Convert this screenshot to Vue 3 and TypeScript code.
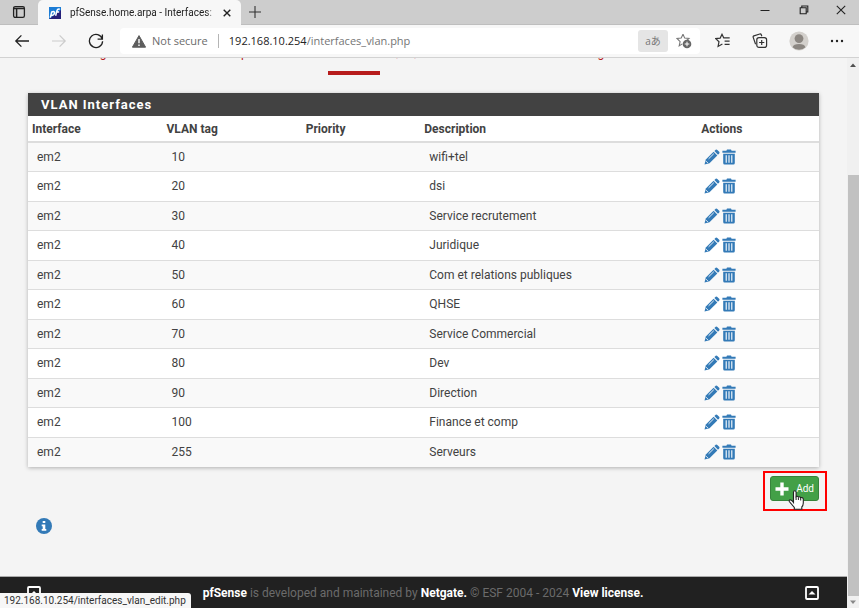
<script setup lang="ts">
interface Vlan {
  parent: string
  tag: number
  priority: string
  description: string
}

const tabs: string[] = [
  'Interface Assignments', 'Interface Groups', 'Wireless', 'VLANs', 'QinQs',
  'PPPs', 'GREs', 'GIFs', 'Bridges', 'LAGGs',
]

const entries: [number, string][] = [
  [10, 'wifi+tel'],
  [20, 'dsi'],
  [30, 'Service recrutement'],
  [40, 'Juridique'],
  [50, 'Com et relations publiques'],
  [60, 'QHSE'],
  [70, 'Service Commercial'],
  [80, 'Dev'],
  [90, 'Direction'],
  [100, 'Finance et comp'],
  [255, 'Serveurs'],
]

const vlans: Vlan[] = entries.map(([tag, description]) => ({
  parent: 'em2', tag, priority: '', description,
}))
</script>

<template>
  <div class="window">
    <header class="strip">
      <button class="workspace" aria-label="Tab actions">
        <svg width="14" height="14" viewBox="0 0 14 14"><rect x="1.6" y="1.6" width="10.8" height="10.8" rx="1.6" fill="none" stroke="#222" stroke-width="1.3" /><path d="M1.5 3.6h11M4.6 4v8.4" stroke="#222" stroke-width="1.5" fill="none" /></svg>
      </button>
      <div class="browser-tab">
        <svg class="favicon" width="12" height="12" viewBox="0 0 12 12"><rect width="12" height="12" fill="#1c7cd5" /><path d="M12 3v9H0z" fill="#252079" /><path d="M1.3 10.6L2.8 4.6M2.5 5.3C4.6 3.8 6 4.8 5.3 6.6 4.8 8.3 3.2 8.6 2 7.9M6.6 8.8L8 3.6Q8.6 1.7 10.8 2.2M7 4.9h3.2" fill="none" stroke="#fff" stroke-width="1.5" /></svg>
        <span class="tab-title">pfSense.home.arpa - Interfaces: VLANs</span>
        <button class="close-tab" aria-label="Close tab">
          <svg width="8" height="8" viewBox="0 0 8 8"><path d="M.7.7l6.6 6.6M7.3.7L.7 7.3" stroke="#222" stroke-width="1.4" /></svg>
        </button>
      </div>
      <button class="new-tab" aria-label="New tab">
        <svg width="12" height="12" viewBox="0 0 12 12"><path d="M6 0v12M0 6h12" stroke="#333" stroke-width="1.1" /></svg>
      </button>
      <div class="window-controls">
        <button aria-label="Minimize"><svg width="10" height="10" viewBox="0 0 10 10"><path d="M.5 5.5h9" stroke="#222" /></svg></button>
        <button aria-label="Restore"><svg width="10" height="10" viewBox="0 0 10 10" fill="none" stroke="#222" stroke-width="1.1"><path d="M1.2 2.7h6v6h-6zM2.8 2.7V1h6v6H7.2" /></svg></button>
        <button aria-label="Close"><svg width="10" height="10" viewBox="0 0 10 10"><path d="M.8.8l8.4 8.4M9.2.8L.8 9.2" stroke="#222" stroke-width="1.1" /></svg></button>
      </div>
    </header>

    <div class="toolbar">
      <div class="nav-buttons">
        <button aria-label="Back"><svg width="16" height="16" viewBox="0 0 16 16" fill="none" stroke="#222" stroke-width="1.3"><path d="M15 8H1.8M7.4 2.4L1.8 8l5.6 5.6" /></svg></button>
        <button aria-label="Forward" disabled><svg width="16" height="16" viewBox="0 0 16 16" fill="none" stroke="#ccc" stroke-width="1.2"><path d="M1 8h13.2M8.6 2.4L14.2 8l-5.6 5.6" /></svg></button>
        <button aria-label="Refresh"><svg width="16" height="16" viewBox="0 0 16 16" fill="none" stroke="#222" stroke-width="1.3"><path d="M14.3 6A6.6 6.6 0 1 0 14.6 8.2M14.4 1.4v4.8H9.6" /></svg></button>
      </div>
      <div class="address">
        <svg width="14" height="13" viewBox="0 0 14 13"><path d="M7 .6L13.6 12.2H.4z" fill="#5d5d5d" stroke="#5d5d5d" stroke-linejoin="round" /><path d="M7 4v4.3M7 9.5V11" stroke="#fff" stroke-width="1.4" /></svg>
        <span class="insecure">Not secure</span>
        <span class="divider"></span>
        <span class="url">192.168.10.254<span class="path">/interfaces_vlan.php</span></span>
        <button class="translate" aria-label="Translate">aあ</button>
        <button class="favorite" aria-label="Add to favorites">
          <svg width="16" height="16" viewBox="0 0 16 16"><path d="M7 1.2l1.7 3.9 4.3.4-3.2 2.9M6.3 10.9L3.2 12.9l.9-4.3L1 5.5l4.2-.4L7 1.2" fill="none" stroke="#777" stroke-width="1.1" /><circle cx="11" cy="11" r="4.3" fill="#666" /><path d="M11 8.7v4.6M8.7 11h4.6" stroke="#fff" /></svg>
        </button>
      </div>
      <div class="tools">
        <button aria-label="Favorites"><svg width="16" height="16" viewBox="0 0 16 16" fill="none" stroke="#333" stroke-width="1.2"><path d="M7.4 10.9L3.1 13.4 4 8.7.8 5.6l4.4-.5L7 1.3l1.7 3.5h6M9.6 8.1h5M9.6 11.3h5" /></svg></button>
        <button aria-label="Collections"><svg width="16" height="16" viewBox="0 0 16 16" fill="none" stroke="#333" stroke-width="1.2"><path d="M3.6 11.2L1.2 4.4Q.8 3.3 1.9 2.9L7.8 1q1.1-.3 1.5.7l.5 1.5" /><rect x="4.8" y="4.6" width="9.8" height="9.8" rx="2.2" /><path d="M9.7 6.9v5.2M7.1 9.5h5.2" /></svg></button>
        <button aria-label="Profile"><svg width="20" height="20" viewBox="0 0 20 20"><circle cx="10" cy="10" r="9.6" fill="#d3d0cc" /><circle cx="10" cy="7.6" r="4.4" fill="#8b8681" /><path d="M3.6 16.2Q4.5 13 10 13t6.4 3.2A9 9 0 0 1 3.6 16.2" fill="#8b8681" /></svg></button>
        <button aria-label="Settings and more"><svg width="14" height="4" viewBox="0 0 14 4" fill="#222"><circle cx="2" cy="2" r="1.2" /><circle cx="7" cy="2" r="1.2" /><circle cx="12" cy="2" r="1.2" /></svg></button>
      </div>
    </div>

    <div class="viewport">
      <div class="page">
        <nav class="page-tabs">
          <a v-for="tab in tabs" :key="tab" href="#" :class="{ active: tab === 'VLANs' }">{{ tab }}</a>
        </nav>

        <main>
          <section class="panel">
            <h2>VLAN Interfaces</h2>
            <table>
              <colgroup>
                <col class="c-interface" /><col class="c-tag" /><col class="c-priority" /><col class="c-description" /><col />
              </colgroup>
              <thead>
                <tr><th>Interface</th><th>VLAN tag</th><th>Priority</th><th>Description</th><th>Actions</th></tr>
              </thead>
              <tbody>
                <tr v-for="vlan in vlans" :key="vlan.tag">
                  <td>{{ vlan.parent }}</td>
                  <td>{{ vlan.tag }}</td>
                  <td>{{ vlan.priority }}</td>
                  <td>{{ vlan.description }}</td>
                  <td class="action-cell">
                    <div class="actions">
                      <a href="#" :aria-label="`Edit VLAN ${vlan.tag}`">
                        <svg width="16" height="16" viewBox="0 0 16 16" fill="#337ab7"><path d="M.5 15.5l1.3-5L9.6 2.8l3.7 3.7-7.8 7.7z" /><path d="M10.4 2l1.3-1.2q.8-.6 1.6.1l1.9 1.9q.7.8 0 1.6L14 5.7z" /><path d="M4.6 9.8l5.2-5.1M2.1 12.2l1.7 1.7" stroke="#fff" stroke-width=".9" /></svg>
                      </a>
                      <a href="#" :aria-label="`Delete VLAN ${vlan.tag}`">
                        <svg width="14" height="16" viewBox="0 0 14 16" fill="#337ab7"><path d="M.4 1.8h4L5 .5h4l.6 1.3h4v1.9H.4zM1.2 4.7h11.6V14q0 1.5-1.4 1.5H2.6Q1.2 15.5 1.2 14z" /><path d="M4.2 6.2v7.5M7 6.2v7.5M9.8 6.2v7.5" stroke="#fff" stroke-width="1.1" /></svg>
                      </a>
                    </div>
                  </td>
                </tr>
              </tbody>
            </table>
          </section>

          <div class="page-actions">
            <div class="add-wrap">
              <button class="add">
                <svg width="14" height="14" viewBox="0 0 14 14"><path d="M7 .5v13M.5 7h13" stroke="#fff" stroke-width="3.4" /></svg>
                Add
              </button>
              <span class="highlight"></span>
              <svg class="pointer" width="17" height="20" viewBox="0 0 17 20"><path d="M5.5 12.5V2.2Q5.6.8 6.8.8T8.1 2.2V6.6Q9.2 5.7 10.4 7 11.6 6.2 12.7 7.7 15 7 15.3 9.2V13Q15.2 15.6 13.8 17V19.2H6.3V17.5L1.3 11.5Q.8 10 2.3 9.7 3.5 9.7 5.5 12.5Z" fill="#fff" stroke="#222" stroke-width="1.1" /><path d="M8.1 6.6V10M10.4 7.3V10M12.7 7.9V10.5" stroke="#222" /></svg>
            </div>
          </div>

          <button class="info" aria-label="Show information">
            <svg width="16" height="16" viewBox="0 0 16 16"><circle cx="8" cy="8" r="8" fill="#337ab7" /><path d="M6.7 3h2.6v2.1H6.7zM5.7 6.5h3.6v4.5h1v1.7H5.7V11h1V8.2h-1z" fill="#fff" /></svg>
          </button>
        </main>

        <footer>
          <a href="#" aria-label="Back to top"><svg width="14" height="14" viewBox="0 0 14 14"><rect x="1" y="1" width="12" height="12" rx="1" fill="none" stroke="#fff" stroke-width="1.8" /><path d="M3.5 8.6L7 5l3.5 3.6z" fill="#fff" /></svg></a>
          <p><a href="#">pfSense</a> is developed and maintained by <a href="#">Netgate.</a> © ESF 2004 - 2024 <a href="#">View license.</a></p>
          <a href="#" aria-label="Back to top"><svg width="14" height="14" viewBox="0 0 14 14"><rect x="1" y="1" width="12" height="12" rx="1" fill="none" stroke="#fff" stroke-width="1.8" /><path d="M3.5 8.6L7 5l3.5 3.6z" fill="#fff" /></svg></a>
        </footer>
        <div class="status">192.168.10.254/interfaces_vlan_edit.php</div>
      </div>

      <div class="scrollbar" aria-hidden="true">
        <svg width="8" height="12" viewBox="0 0 8 12"><path d="M1 9l3-3.5L7 9z" fill="#505050" /></svg>
        <div class="track"><div class="thumb"></div></div>
        <svg width="8" height="12" viewBox="0 0 8 12"><path d="M1 4.5L4 8l3-3.5z" fill="#888" /></svg>
      </div>
    </div>
  </div>
</template>

<style>
body { margin: 0; }
</style>

<style scoped>
* { box-sizing: border-box; }
button { border: 0; padding: 0; background: none; font: inherit; color: inherit; display: flex; align-items: center; justify-content: center; }
a { text-decoration: none; }
svg { display: block; flex: none; }

.window { height: 100vh; display: flex; flex-direction: column; overflow: hidden; background: #f4f4f4; font: 11px/16px "Open Sans", "Noto Sans CJK JP", sans-serif; color: #222; }

.strip { display: flex; flex: none; height: 25px; background: #cdcdcd; border-bottom: 1px solid #bebebe; }
.workspace { width: 38px; flex: none; }
.browser-tab { display: flex; align-items: center; width: 203px; height: 25px; padding: 0 9px 0 11px; background: #f7f7f7; border-radius: 5px 5px 0 0; font-family: Roboto, sans-serif; font-size: 10px; }
.tab-title { flex: 1; min-width: 0; margin: 0 8px 0 9px; white-space: nowrap; overflow: hidden; mask-image: linear-gradient(to right, #000 136px, transparent 148px); }
.close-tab { width: 10px; height: 16px; }
.new-tab { width: 28px; }
.window-controls { display: flex; margin-left: auto; }
.window-controls button { width: 39px; height: 20px; }
.window-controls button:last-child { width: 36px; }

.toolbar { display: flex; flex: none; align-items: center; height: 33px; background: #f7f7f7; border-bottom: 1px solid #d2d2d2; }
.nav-buttons { display: flex; gap: 21px; width: 120px; flex: none; padding-left: 14px; }
.address { display: flex; align-items: center; flex: 1; height: 26px; padding: 0 0 0 12px; background: #fff; border-radius: 4px; }
.insecure { margin-left: 6px; color: #6b6b6b; }
.divider { width: 1px; height: 14px; margin: 0 10px; background: #b5b5b5; }
.url { flex: 1; white-space: nowrap; }
.path { color: #757575; }
.translate { width: 30px; height: 22px; background: #e5e5e5; border-radius: 3px; color: #777; font-size: 10px; }
.favorite { width: 32px; }
.tools { display: flex; width: 159px; flex: none; justify-content: space-between; padding: 0 15px 0 15px; }

.viewport { display: flex; flex: 1; min-height: 0; }
.page { position: relative; display: flex; flex-direction: column; flex: 1; min-width: 0; overflow: hidden; font-family: Roboto, sans-serif; font-size: 12px; color: #424242; }
.page-tabs { display: flex; flex: none; gap: 2px; margin: -13px 0 0 18px; }
.page-tabs a { padding: 0 8px 10px; border-bottom: 4px solid transparent; color: #b71c1c; white-space: nowrap; }
.page-tabs a.active { border-color: #b71c1c; }

main { flex: 1; padding: 18px 28px 0; }
.panel { background: #fff; box-shadow: 0 1px 4px rgba(0, 0, 0, .28); }
h2 { margin: 0; padding: 0 13px; background: #424242; color: #fff; font-size: 13px; line-height: 23px; font-weight: 700; letter-spacing: 1px; }
table { width: 100%; table-layout: fixed; border-collapse: separate; border-spacing: 0; }
.c-interface { width: 17%; }
.c-tag { width: 17.6%; }
.c-priority { width: 15%; }
.c-description { width: 35%; }
th { height: 27px; padding: 0 4px; border-bottom: 2px solid #ddd; text-align: left; font-weight: 700; }
td { height: 29px; padding: 0 9px 1px; border-bottom: 1px solid #ddd; }
tr:nth-child(even) td { height: 30px; }
tbody tr:nth-child(odd) { background: #f9f9f9; }
tbody tr:last-child td { border-bottom: 0; }
.action-cell { padding: 0 7px 1px; }
.actions { display: flex; gap: 2px; }

.page-actions { display: flex; justify-content: flex-end; padding-top: 9px; }
.add-wrap { position: relative; }
.add { gap: 7px; height: 25px; padding: 0 4px; background: #43a047; border: 1px solid #37833b; border-radius: 3px; color: #fff; font-size: 10px; }
.highlight { position: absolute; inset: -5px -8px -10px -7px; border: 2px solid #f00; }
.pointer { position: absolute; left: 18px; top: 14px; }
.info { margin: 17px 0 0 8px; }

footer { display: flex; flex: none; align-items: center; justify-content: space-between; height: 32px; padding: 0 28px 0 27px; background: #212121; border-top: 1px solid #aaa; color: #6b6b6b; }
footer p { margin: 0; }
footer p a { color: #fff; font-weight: 700; }
.status { position: absolute; left: 0; bottom: 0; height: 15px; padding: 0 5px 0 4px; background: #f7f7f7; border-radius: 0 3px 0 0; color: #333; font-size: 10px; line-height: 16px; }

.scrollbar { display: flex; flex-direction: column; align-items: center; width: 12px; flex: none; background: #f0f0f0; }
.track { display: flex; flex-direction: column; justify-content: flex-end; flex: 1; width: 100%; padding-left: 1px; }
.thumb { height: 80%; background: #c1c1c1; }
</style>
